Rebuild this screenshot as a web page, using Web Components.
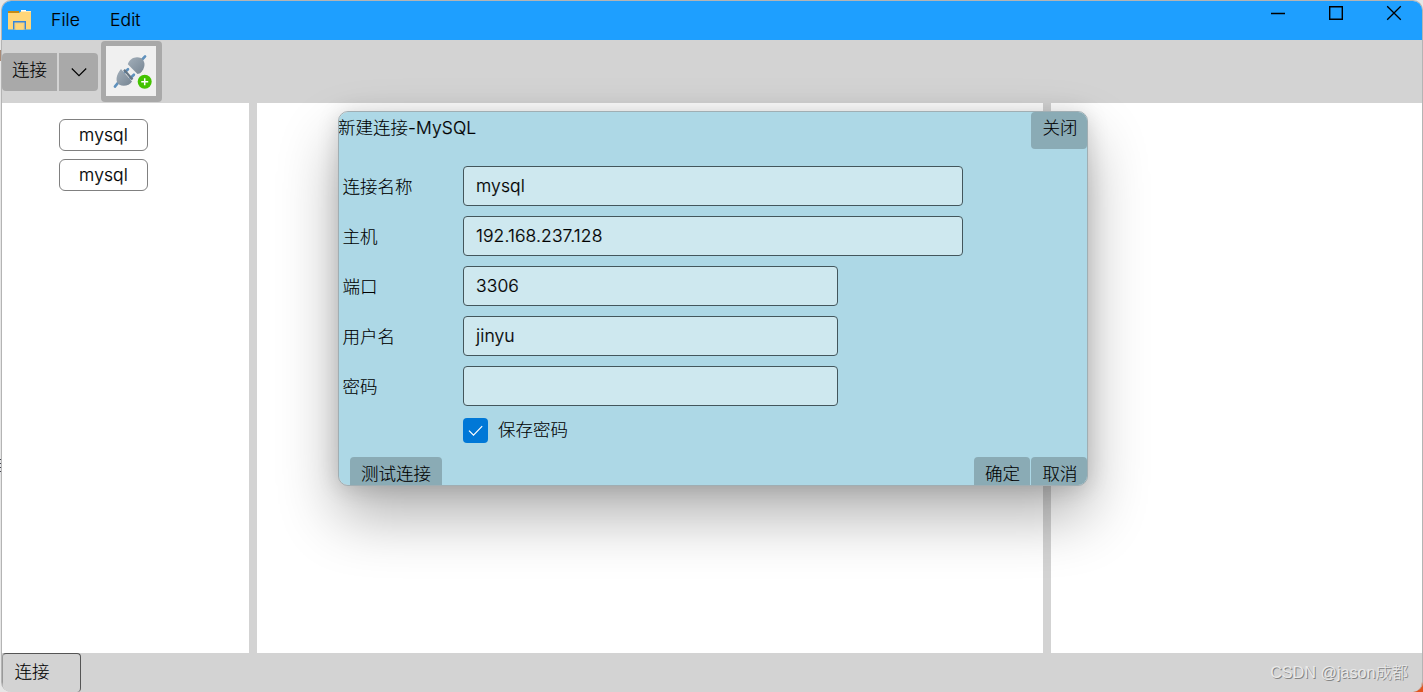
<!DOCTYPE html>
<html lang="zh"><head><meta charset="utf-8"><title>DB Client</title>
<style>
html,body{margin:0;height:100%;overflow:hidden}
body{background:
 linear-gradient(#e2551f,#e2551f) 100% 100%/12px 12px no-repeat,
 linear-gradient(#c9b58c,#d9783f) 100% 100%/2px 58px no-repeat,
 repeating-linear-gradient(#44474f 0 1px,#e4e4e6 1px 4px) 0 459px/2px 16px no-repeat,
 linear-gradient(#a98a76,#a98a76) 0 50px/2px 11px no-repeat,
 #e6e6e6;
font:17.5px/22px Inter,"Noto Sans CJK SC",sans-serif;font-weight:300;letter-spacing:.1px;-webkit-text-stroke:.2px #000;color:#000}
</style></head><body>
<app-window></app-window>
<script>
const define=(name,html)=>{
  const t=document.createElement('template');t.innerHTML=html;
  customElements.define(name,class extends HTMLElement{
    constructor(){super();this.attachShadow({mode:'open'}).append(t.content.cloneNode(true));}
  });
};

define('zh-text',`<style>:host{display:inline-block;white-space:nowrap;letter-spacing:0;-webkit-text-stroke:.1px #000}</style><slot></slot>`);

define('title-bar',`<style>
:host{display:flex;height:39px;flex:none;background:#1e9fff;align-items:flex-start;box-sizing:border-box}
.folder{margin:8px 0 0 5px;width:26px;height:22px}
.menu{margin-top:8px;line-height:22px}
.file{margin-left:18px;width:59px}
.sys{margin:2px 18px 0 auto;display:flex;gap:38px}
svg{display:block}
</style>
<svg class="folder" viewBox="0 0 26 22"><path d="M1 2h11v4H1z" fill="#c48b16"/><path d="M14 1h5v1h5v4H14z" fill="#fff"/><path d="M1 4h11l2-1.500h10V20.500H1z" fill="#ffd679"/><path d="M6.700 20.500v-7.800h11.600v7.800" fill="#f1cf84" stroke="#3686dc" stroke-width="1.400"/><path d="M9 15h7v5.500H9z" fill="#ffd679"/></svg>
<span class="menu file">File</span><span class="menu">Edit</span>
<div class="sys">
<svg width="20" height="20" viewBox="0 0 20 20"><path d="M3 10.500h14" stroke="#000" stroke-width="1.300"/></svg>
<svg width="20" height="20" viewBox="0 0 20 20"><path d="M3.700 3.700h12.600v12.600H3.700z" fill="none" stroke="#000" stroke-width="1.400"/></svg>
<svg width="20" height="20" viewBox="0 0 20 20"><path d="M3.200 3.200l13.600 13.600M16.800 3.200L3.200 16.800" stroke="#000" stroke-width="1.300"/></svg>
</div>`);

define('tool-bar',`<style>
:host{display:flex;height:63px;flex:none;background:#d3d3d3;align-items:flex-start}
.b{height:38px;margin-top:13px;background:#a9a9a9;display:flex;justify-content:center;box-sizing:border-box}
.l{width:55px;border-radius:4px 0 0 4px;padding-top:6px;margin-right:2px}
.r{width:39px;border-radius:0 4px 4px 0;align-items:center}
.plug{margin:1px 0 0 3px;width:61px;height:61px;box-sizing:border-box;background:#a9a9a9;border-radius:4px;padding:5px}
.plug svg{display:block;background:#f0f0f0}
</style>
<div class="b l"><zh-text>连接</zh-text></div>
<div class="b r"><svg width="16" height="10" viewBox="0 0 16 10"><path d="M.8 1.500L8 8.700l7.200-7.200" fill="none" stroke="#000" stroke-width="1.200"/></svg></div>
<div class="plug"><svg width="50" height="50" viewBox="0 0 50 50">
<defs><linearGradient id="g" x1="0" y1="0" x2="1" y2="1"><stop offset="0" stop-color="#a3afba"/><stop offset="1" stop-color="#768593"/></linearGradient></defs>
<g stroke="#5f91bd" stroke-width="2.600" fill="none" stroke-linecap="round"><path d="M8.900 40.600l4.300-5.200M34.800 15l4.300-4.600M18.500 26.500l3.500-3.300M24.500 32l3.400-3.300"/></g>
<path d="M15 23L26 35.500c-2 4-9 5.500-12.500 3.200-4.700-2.400-3.500-10.200 1.500-15.700z" fill="url(#g)"/>
<path d="M21.800 18.200c1.500-5.400 7.500-8.600 13.200-6.200 5 3.800 4.600 10-.8 15.200l-2.700.8z" fill="url(#g)"/>
<path d="M18 23.700l8.500 9.800" stroke="#667684" stroke-width="2.200"/>
<circle cx="38.700" cy="35.700" r="7" fill="#43c300"/><path d="M35.200 35.700h7M38.700 32.200v7" stroke="#fff" stroke-width="1.500"/>
</svg></div>`);

define('conn-item',`<style>
:host{display:block;width:89px;height:32px;box-sizing:border-box;border:1px solid #808080;border-radius:6px;background:#fff;text-align:center;line-height:30px}
</style><slot></slot>`);

define('work-area',`<style>
:host{display:grid;grid-template-columns:247px 786px 1fr;column-gap:8px;background:#d3d3d3;height:550px;flex:none}
div{background:#fff}
.side{display:flex;flex-direction:column;gap:8px;padding:16px 0 0 57px}
</style>
<div class="side"><conn-item>mysql</conn-item><conn-item>mysql</conn-item></div><div></div><div></div>`);

define('status-bar',`<style>
:host{display:flex;flex:1;min-height:0;background:#d3d3d3;justify-content:space-between}
.tab{width:79px;height:39px;box-sizing:border-box;border:1px solid #555;border-left-color:#999;border-bottom:0;border-radius:4px;padding:7px 0 0 11.500px}
.wm{font-family:"Liberation Sans","Noto Sans CJK SC",sans-serif;font-size:16.200px;letter-spacing:0;-webkit-text-stroke:0;color:#e9e9e9;text-shadow:1px 1px 0 #858585;padding:8px 14px 0 0;font-weight:300}
</style><div class="tab"><zh-text>连接</zh-text></div><span class="wm">CSDN @jason成都</span>`);

define('push-button',`<style>
:host{display:block;height:37px;box-sizing:border-box;border-radius:4px;background:#8aabb5;padding:5px 0 0 11.500px;white-space:nowrap;width:var(--bw,56px)}
</style><zh-text><slot></slot></zh-text>`);

define('form-row',`<style>
:host{display:grid;grid-template-columns:120px 1fr;height:40px;align-items:center}
.v{box-sizing:border-box;height:40px;width:var(--w,375px);border:1px solid #43565c;border-radius:4px;background:#cee8ef;padding-left:12px;line-height:38px}
zh-text{margin:2px 0 0 -.5px}
</style><zh-text><slot name="label"></slot></zh-text><div class="v"><slot></slot></div>`);

define('connect-dialog',`<style>
:host{display:flex;flex-direction:column;box-sizing:border-box;width:750px;height:375px;border:1px solid #a0aeb3;border-radius:10px;background:#add8e6;background-clip:padding-box;overflow:hidden;box-shadow:0 30px 60px rgba(0,0,0,.31),0 2px 21px rgba(0,0,0,.15)}
header{display:flex;justify-content:space-between;height:37px}
h1{margin:5px 0 0 -1px;font:inherit}
main{padding:17px 4px 0;display:flex;flex-direction:column;gap:10px}
.wide{--w:500px}
.save{display:flex;align-items:center;height:26px;margin:1px 0 0 120px;gap:10px}
.save svg{display:block}
footer{display:flex;height:28px;margin:14px 0 0 11px;gap:1px}
footer push-button{flex:none;padding-top:6px}
.test{--bw:92px;padding-left:11px}
.ok{margin-left:auto;padding-left:11px}
</style>
<header><h1><zh-text>新建连接</zh-text>-MySQL</h1><push-button>关闭</push-button></header>
<main>
<form-row class="wide"><span slot="label">连接名称</span>mysql</form-row>
<form-row class="wide"><span slot="label">主机</span>192.168.237.128</form-row>
<form-row><span slot="label">端口</span>3306</form-row>
<form-row><span slot="label">用户名</span>jinyu</form-row>
<form-row><span slot="label">密码</span></form-row>
<div class="save"><svg width="25" height="25" viewBox="0 0 25 25"><rect width="25" height="25" rx="4" fill="#0078d7"/><path d="M6 12.600l4.500 4.500L19.200 8.200" fill="none" stroke="#fff" stroke-width="1.200"/></svg><zh-text>保存密码</zh-text></div>
</main>
<footer><push-button class="test">测试连接</push-button><push-button class="ok">确定</push-button><push-button>取消</push-button></footer>`);

define('app-window',`<style>
:host{display:block;height:692px;box-sizing:border-box;padding-left:1px;position:relative}
.win{height:692px;box-sizing:border-box;display:flex;flex-direction:column;border:1px solid #b4b4b4;border-bottom:0;border-radius:10px;overflow:hidden}
connect-dialog{position:absolute;left:338px;top:111px}
</style>
<div class="win"><title-bar></title-bar><tool-bar></tool-bar><work-area></work-area><status-bar></status-bar></div>
<connect-dialog></connect-dialog>`);
</script></body></html>
